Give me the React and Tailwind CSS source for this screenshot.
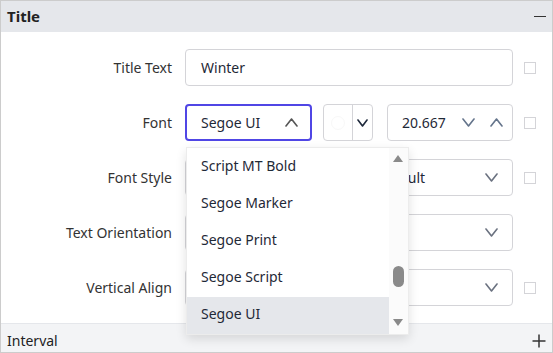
import React from "react";

const Chevron = ({ up = false, className = "", w = 13, h = 7 }) => (
  <svg width={w} height={h + 2} viewBox={`0 0 ${w} ${h + 2}`} className={className} fill="none">
    {up ? (
      <polyline points={`1,${h + 1} ${w / 2},1 ${w - 1},${h + 1}`} stroke="currentColor" strokeWidth="1.6" strokeLinecap="round" strokeLinejoin="round" />
    ) : (
      <polyline points={`1,1 ${w / 2},${h + 1} ${w - 1},1`} stroke="currentColor" strokeWidth="1.6" strokeLinecap="round" strokeLinejoin="round" />
    )}
  </svg>
);

const Checkbox = () => <div className="w-[12px] h-[12px] border border-[#d4d4d8] bg-white shrink-0" />;

const Row = ({ label, children, check = true }) => (
  <div className="flex items-center h-[37px]">
    <div className="w-[171px] text-right text-[14px] text-[#333333] whitespace-nowrap">{label}</div>
    <div className="ml-[13px] w-[328px] h-[37px] flex">{children}</div>
    <div className="ml-[11px] w-[12px]">{check && <Checkbox />}</div>
  </div>
);

const Select = ({ value, className = "w-full" }) => (
  <div className={`${className} h-full border border-[#d4d4d8] rounded-[4px] bg-white flex items-center pl-[15px] pr-[14px] justify-between`}>
    <span className="text-[14px] text-[#1f2937]">{value}</span>
    <Chevron className="text-[#6b7280]" />
  </div>
);

export default function App() {
  const items = ["Script MT Bold", "Segoe Marker", "Segoe Print", "Segoe Script", "Segoe UI"];
  return (
    <div
      className="relative w-[553px] h-[353px] border border-[#cccccc] flex flex-col bg-white overflow-hidden"
      style={{ fontFamily: '"Noto Sans", "Open Sans", sans-serif' }}
    >
      <div className="h-[31px] shrink-0 bg-[#e5e7eb] flex items-center justify-between pl-[6px] pr-[6px]">
        <span className="text-[15px] font-bold text-[#222222]">Title</span>
        <div className="w-[12px] h-[1.5px] bg-[#333333]" />
      </div>

      <div className="flex-1 pt-[17px] flex flex-col gap-[18px]">
        <Row label="Title Text">
          <div className="w-full h-full border border-[#d4d4d8] rounded-[4px] bg-white flex items-center pl-[15px]">
            <span className="text-[14px] text-[#1f2937]">Winter</span>
          </div>
        </Row>

        <Row label="Font">
          <div className="w-[127px] h-full border-2 border-[#5046e5] rounded-[4px] bg-white flex items-center justify-between pl-[14px] pr-[12px]">
            <span className="text-[14px] text-[#1f2937]">Segoe UI</span>
            <Chevron up className="text-[#555555]" />
          </div>
          <div className="ml-[11px] w-[50px] h-full border border-[#d4d4d8] rounded-[4px] bg-white flex">
            <div className="w-[29px] h-full border-r border-[#d4d4d8] flex items-center justify-center">
              <div className="w-[14px] h-[14px] rounded-full border border-[#f8f8f8]" />
            </div>
            <div className="flex-1 flex items-center justify-center">
              <Chevron w={11} h={6} className="text-[#1e293b]" />
            </div>
          </div>
          <div className="ml-[14px] flex-1 h-full border border-[#d4d4d8] rounded-[4px] bg-white flex items-center pl-[14px] pr-[9px]">
            <span className="text-[14px] text-[#1f2937] flex-1">20.667</span>
            <Chevron className="text-[#64748b]" />
            <Chevron up className="ml-[15px] text-[#64748b]" />
          </div>
        </Row>

        <Row label="Font Style">
          <Select value="Normal" className="w-[167px]" />
          <Select value="Default" className="ml-[9px] flex-1" />
        </Row>

        <Row label="Text Orientation" check={false}>
          <Select value="Auto" />
        </Row>

        <Row label="Vertical Align">
          <Select value="Top" />
        </Row>
      </div>

      <div className="h-[29px] shrink-0 border-t border-[#e5e7eb] bg-[#f3f4f6] flex items-center justify-between pl-[6px] pr-[6px] pt-[5px]">
        <span className="text-[14px] text-[#222222]">Interval</span>
        <svg width="14" height="14" viewBox="0 0 14 14">
          <line x1="7" y1="0.5" x2="7" y2="13.5" stroke="#333333" strokeWidth="1.5" />
          <line x1="0.5" y1="7" x2="13.5" y2="7" stroke="#333333" strokeWidth="1.5" />
        </svg>
      </div>

      <div className="absolute left-[185px] top-[146px] w-[223px] h-[188px] bg-white border border-[#ececec] shadow-[0_4px_10px_rgba(0,0,0,0.12)] flex">
        <div className="flex-1 flex flex-col">
          {items.map((t, i) => (
            <div
              key={t}
              className={`h-[37.6px] flex items-center pl-[14px] pb-[3px] text-[14px] text-[#1f2937] ${i === 4 ? "bg-[#e5e7eb]" : ""}`}
            >
              {t}
            </div>
          ))}
        </div>
        <div className="w-[19px] h-full bg-[#fbfbfb] relative">
          <svg className="absolute left-[4px] top-[7px]" width="10" height="7" viewBox="0 0 10 7">
            <polygon points="0,7 5,0 10,7" fill="#8a8a8a" />
          </svg>
          <div className="absolute left-[4px] top-[118px] w-[11px] h-[21px] rounded-full bg-[#8a8a8a]" />
          <svg className="absolute left-[4px] top-[171px]" width="10" height="7" viewBox="0 0 10 7">
            <polygon points="0,0 10,0 5,7" fill="#8a8a8a" />
          </svg>
        </div>
      </div>
    </div>
  );
}
